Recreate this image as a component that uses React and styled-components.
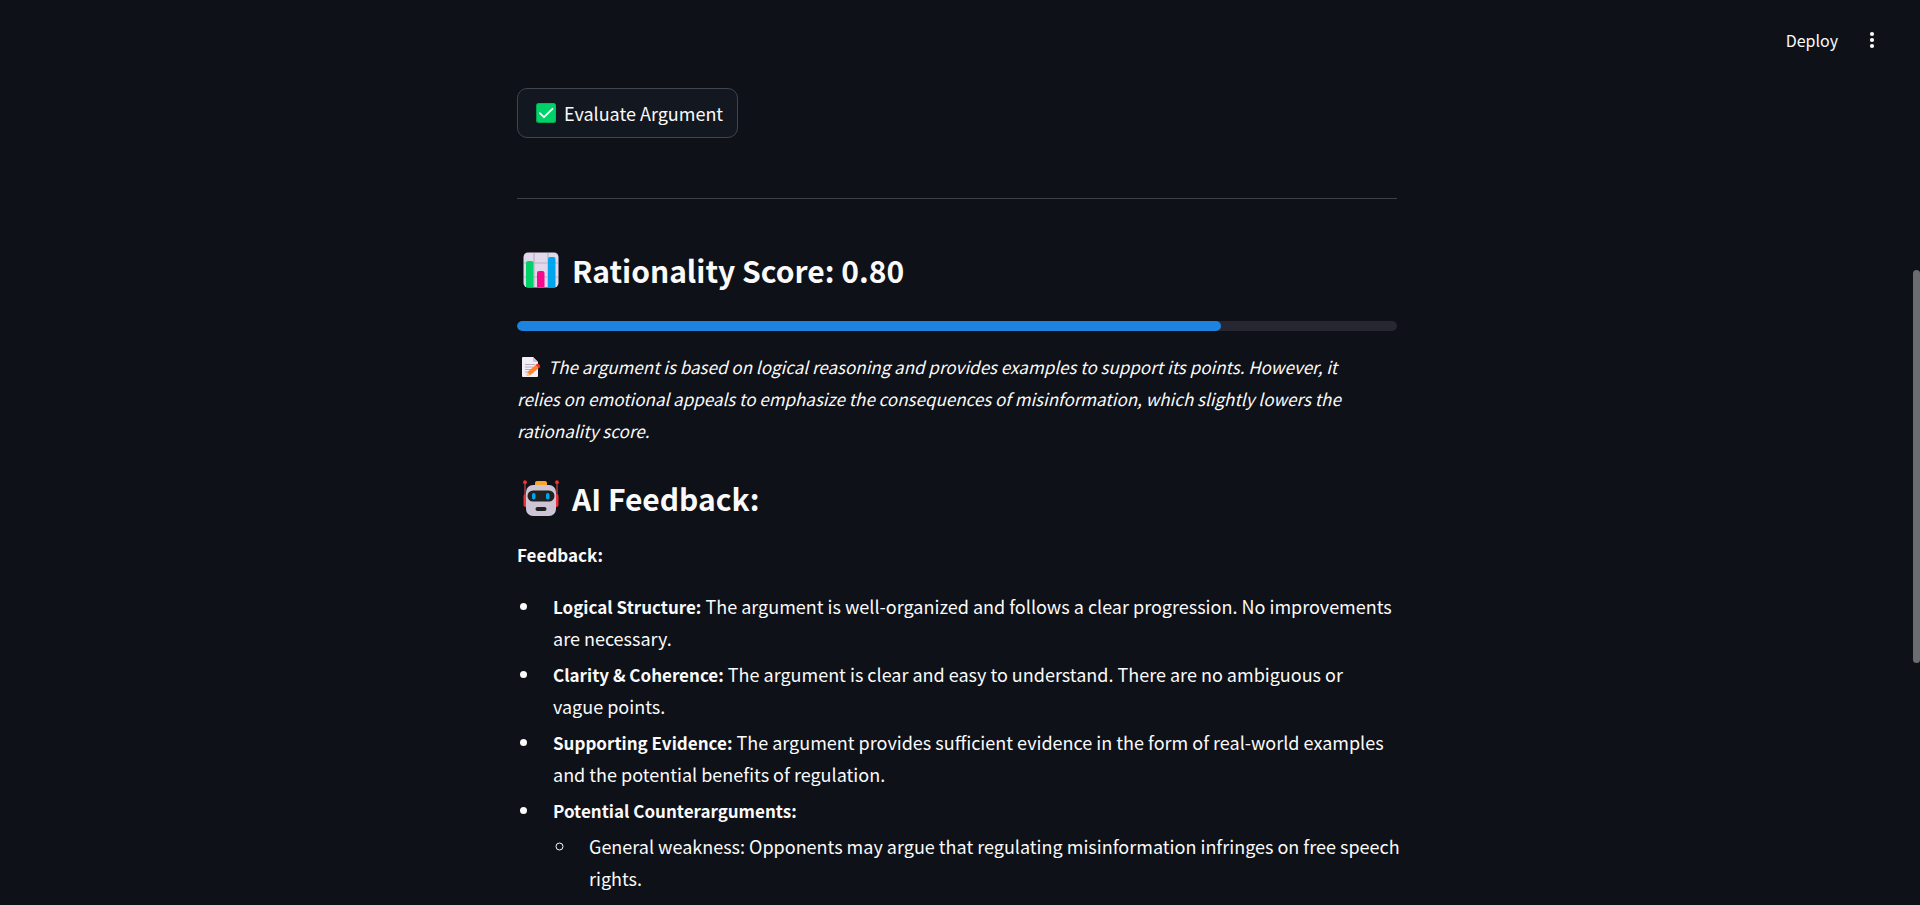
import React from 'react';
import styled, { createGlobalStyle } from 'styled-components';

const GlobalStyle = createGlobalStyle`
  * { box-sizing: border-box; }
  body {
    margin: 0;
    background: #0e1117;
    color: #fafafa;
    font-family: "Source Sans Pro", "Noto Sans CJK SC", sans-serif;
    font-size: 18px;
    line-height: 32px;
  }
`;

const Page = styled.div`
  position: relative;
  height: 100vh;
  overflow: hidden;
  padding-right: 6px;
`;

const Header = styled.header`
  display: flex;
  align-items: center;
  justify-content: flex-end;
  gap: 22px;
  height: 80px;
  padding-right: 30px;
`;

const HeaderButton = styled.button`
  display: inline-flex;
  align-items: center;
  justify-content: center;
  min-width: 24px;
  padding: 0;
  border: 0;
  background: transparent;
  color: inherit;
  font: inherit;
  font-size: 16px;
  line-height: 24px;
  cursor: pointer;
`;

const Main = styled.main`
  max-width: 880px;
  margin: 0 auto;
  padding-top: 8px;
`;

const EvaluateButton = styled.button`
  display: inline-flex;
  align-items: center;
  gap: 8px;
  height: 50px;
  padding: 0 14px 0 18px;
  border: 1px solid #41444c;
  border-radius: 10px;
  background: #131720;
  color: inherit;
  font: inherit;
  cursor: pointer;
`;

const Divider = styled.hr`
  height: 1px;
  margin: 60px 0 50px;
  border: 0;
  background: #3d4044;
`;

const Heading = styled.h3`
  display: flex;
  align-items: center;
  gap: 13px;
  margin: 0;
  padding-left: 6px;
  font-size: 30px;
  font-weight: 600;
  line-height: 42px;
`;

const Track = styled.div`
  height: 10px;
  margin: 30px 0 20px;
  border-radius: 5px;
  background: #262730;
  overflow: hidden;
`;

const Fill = styled.div`
  height: 100%;
  border-radius: 5px;
  background: #1c83e1;
`;

const Paragraph = styled.p`
  margin: 0 0 30px;
  padding-right: 20px;
  font-size: 17px;
  font-style: italic;
`;

const Label = styled.p`
  margin: 19px 0 20px;
  font-weight: 600;
`;

const List = styled.ul`
  margin: 0;
  padding: 0;
`;

const Item = styled.li`
  margin: 0 0 4px 24px;
  padding-left: 12px;

  & > ul { margin: 4px -4px 0 0; }
`;

const Strong = styled.strong`
  font-size: 17px;
  font-weight: 600;
  line-height: 24px;
`;

const Emoji = styled.svg`
  flex: none;
`;

const NoteIcon = styled(Emoji)`
  margin: 0 7px 0 5px;
  vertical-align: -3px;
`;

const ScrollThumb = styled.div`
  position: absolute;
  top: 270px;
  right: 0;
  width: 7px;
  height: 393px;
  border-radius: 4px;
  background: #6b6c70;
`;

const CheckEmoji = () => (
  <Emoji width="20" height="20" viewBox="0 0 20 20" aria-hidden="true">
    <rect width="20" height="20" rx="2.5" fill="#00a650" />
    <rect x="1" y="0.6" width="18.6" height="18.4" rx="2" fill="#00d26a" />
    <path d="M3.8 10.2l4.2 4 8.400-8.400" fill="none" stroke="#fff" strokeWidth="1.8" strokeLinecap="round" strokeLinejoin="round" />
  </Emoji>
);

const ChartEmoji = () => (
  <Emoji width="36" height="36" viewBox="0 0 36 36" aria-hidden="true">
    <rect x="0.500" y="0.500" width="35" height="35" rx="4.500" fill="#e1d8ec" />
    <path d="M11 1v34M25 1v34M1 11h34M1 25h34" stroke="#b9b0c2" strokeWidth="1.200" />
    <path d="M3 35V11q0-2 2-2h3.500q2 0 2 2v24z" fill="#00d26a" />
    <path d="M14 35V21q0-2 2-2h3.500q2 0 2 2v14z" fill="#f70a8d" />
    <path d="M25 35V7q0-2 2-2h3.500q2 0 2 2v28z" fill="#00a6ed" />
  </Emoji>
);

const MemoEmoji = () => (
  <NoteIcon width="19" height="20" viewBox="0 0 19 20" aria-hidden="true">
    <path d="M0 1q0-1 1-1h10l5 5v14q0 1-1 1H1q-1 0-1-1z" fill="#f3eef8" />
    <path d="M11 0l5 5h-4q-1 0-1-1z" fill="#cdc4d6" />
    <path d="M3 7.500h10M3 10h8M3 12.500h6M3 15h3" stroke="#b4acbc" strokeWidth="1" />
    <path d="M5.500 15l8-7 3 3.200-8.500 7-3.500.6z" fill="#ff822d" />
    <path d="M5.500 15l2.500 3.200-3.500.6z" fill="#ffce7c" />
    <path d="M13.500 8l1.200-1q1.200-.8 2.600.6t.600 2.800l-1.400.8z" fill="#f8312f" />
  </NoteIcon>
);

const RobotEmoji = () => (
  <Emoji width="36" height="36" viewBox="0 0 36 36" aria-hidden="true">
    <rect x="12" y="1" width="12" height="7" rx="2" fill="#f9a72b" />
    <path d="M2 3v22M34 3v22" stroke="#b8434f" strokeWidth="1.300" />
    <circle cx="2" cy="2.200" r="1.900" fill="#f8312f" />
    <circle cx="34" cy="2.200" r="1.900" fill="#f8312f" />
    <rect x="0.500" y="14" width="5" height="13" rx="2" fill="#e8353a" />
    <rect x="30.500" y="14" width="5" height="13" rx="2" fill="#e8353a" />
    <rect x="3" y="5" width="30" height="31" rx="7" fill="#cdc4d6" />
    <rect x="4.500" y="10.500" width="27" height="11" rx="5.500" fill="#212121" />
    <rect x="9" y="13" width="3.500" height="6.500" rx="1.700" fill="#00a6ed" />
    <rect x="23" y="13" width="3.500" height="6.500" rx="1.700" fill="#00a6ed" />
    <rect x="12.500" y="27" width="11" height="4" rx="2" fill="#212121" />
  </Emoji>
);

const feedback = [
  { title: 'Logical Structure:', text: 'The argument is well-organized and follows a clear progression. No improvements are necessary.' },
  { title: 'Clarity & Coherence:', text: 'The argument is clear and easy to understand. There are no ambiguous or vague points.' },
  { title: 'Supporting Evidence:', text: 'The argument provides sufficient evidence in the form of real-world examples and the potential benefits of regulation.' },
  {
    title: 'Potential Counterarguments:',
    points: ['General weakness: Opponents may argue that regulating misinformation infringes on free speech rights.'],
  },
];

const score = 0.8;

export default function App() {
  return (
    <>
      <GlobalStyle />
      <Page>
        <Header>
          <HeaderButton type="button">Deploy</HeaderButton>
          <HeaderButton type="button" aria-label="Main menu">
            <svg width="6" height="18" viewBox="0 0 6 18" fill="currentColor" aria-hidden="true">
              <circle cx="3" cy="3" r="2.100" />
              <circle cx="3" cy="9" r="2.100" />
              <circle cx="3" cy="15" r="2.100" />
            </svg>
          </HeaderButton>
        </Header>
        <Main>
          <EvaluateButton type="button">
            <CheckEmoji />
            Evaluate Argument
          </EvaluateButton>
          <Divider />
          <Heading>
            <ChartEmoji />
            Rationality Score: {score.toFixed(2)}
          </Heading>
          <Track role="progressbar" aria-label="Rationality score" aria-valuemin={0} aria-valuemax={1} aria-valuenow={score}>
            <Fill style={{ width: `${score * 100}%` }} />
          </Track>
          <Paragraph>
            <MemoEmoji />
            The argument is based on logical reasoning and provides examples to support its points. However, it relies on
            emotional appeals to emphasize the consequences of misinformation, which slightly lowers the rationality score.
          </Paragraph>
          <Heading>
            <RobotEmoji />
            AI Feedback:
          </Heading>
          <Label>
            <Strong>Feedback:</Strong>
          </Label>
          <List>
            {feedback.map(({ title, text, points }) => (
              <Item key={title}>
                <Strong>{title}</Strong> {text}
                {points && (
                  <List>
                    {points.map((point) => (
                      <Item key={point}>{point}</Item>
                    ))}
                  </List>
                )}
              </Item>
            ))}
          </List>
        </Main>
        <ScrollThumb />
      </Page>
    </>
  );
}
